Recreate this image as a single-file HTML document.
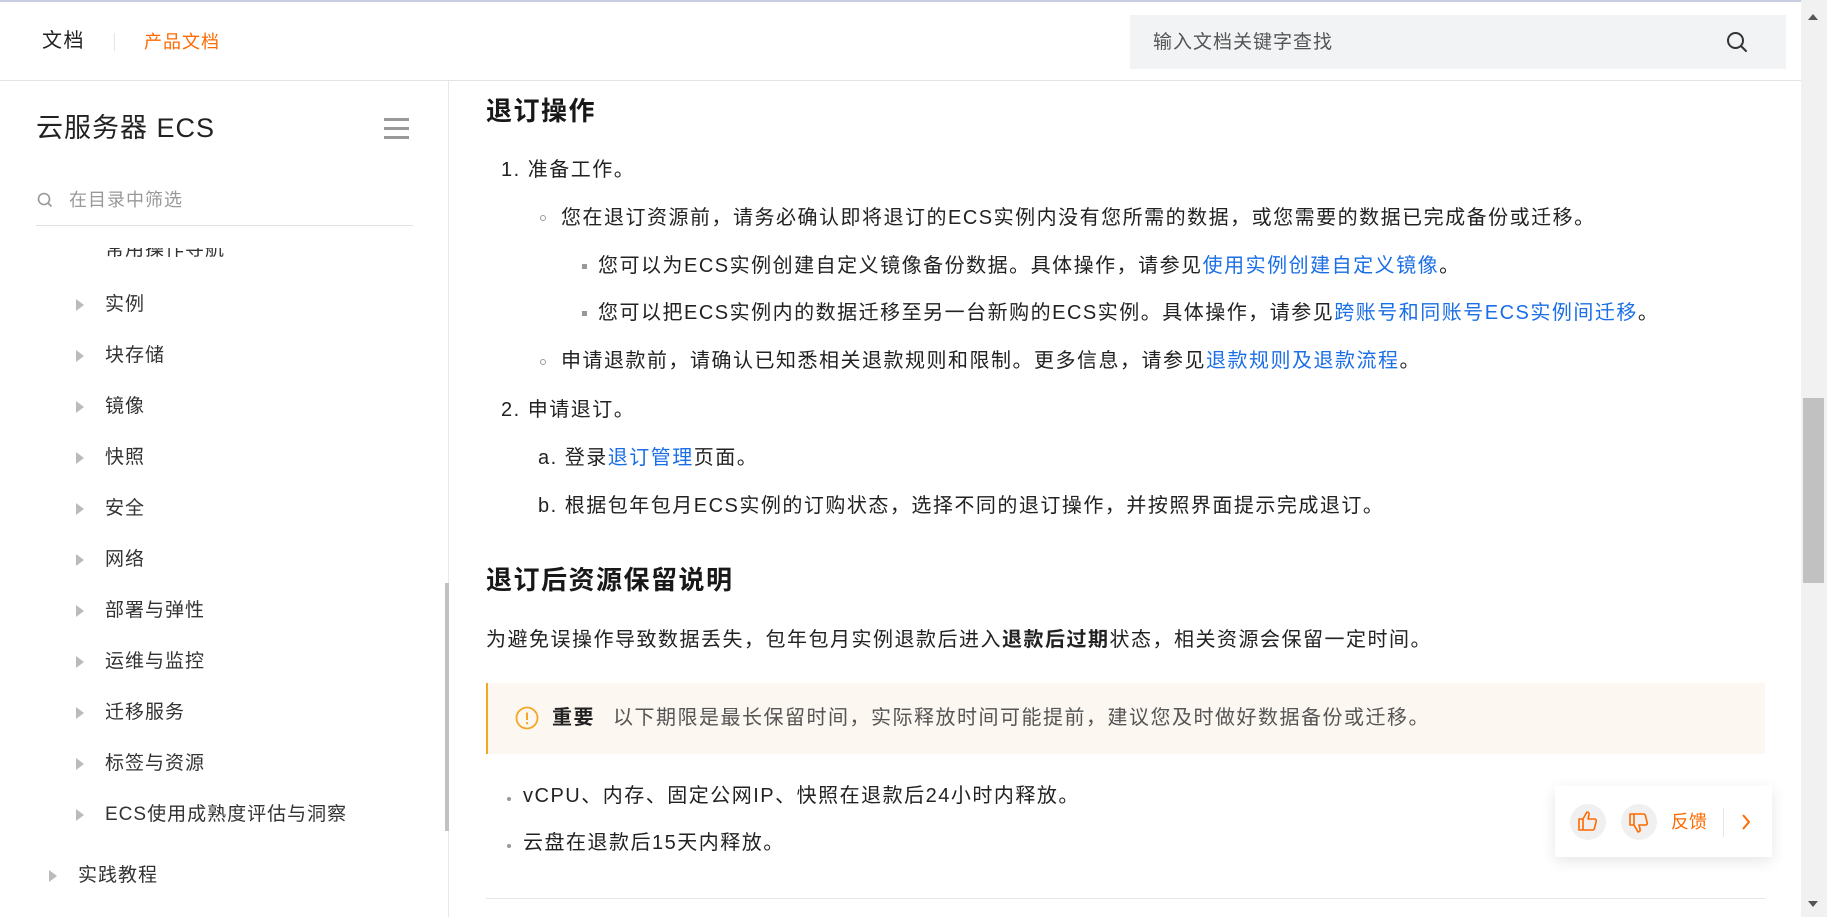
<!DOCTYPE html>
<html><head><meta charset="utf-8"><style>
*{margin:0;padding:0;box-sizing:border-box}
body{width:1827px;height:917px;overflow:hidden;background:#fff;font-family:"Liberation Sans","Noto Sans CJK SC",sans-serif;color:#181818;position:relative}
.a{position:absolute;white-space:nowrap}
.t{font-size:20px;letter-spacing:1.5px;line-height:30px;color:#222}
.lk{color:#1b6fe6}
.sb{font-size:19px;letter-spacing:1px;line-height:30px;color:#333}
.tri{position:absolute;width:0;height:0;border-top:6px solid transparent;border-bottom:6px solid transparent;border-left:8px solid #bbb}
h2{position:absolute;font-size:26px;letter-spacing:1.5px;font-weight:bold;line-height:36px;color:#181818;white-space:nowrap}
</style></head><body>
<div class="a" style="left:0;top:0;width:1827px;height:2px;background:#c9cfe0"></div>
<!-- header -->
<div class="a" style="left:0;top:80px;width:1801px;height:1px;background:#e3e3e3"></div>
<div class="a" style="left:42px;top:26px;font-size:20px;letter-spacing:1.5px;line-height:30px;color:#222">文档</div>
<div class="a" style="left:114px;top:33px;width:1px;height:18px;background:#e5e5e5"></div>
<div class="a" style="left:144px;top:27px;font-size:18px;letter-spacing:1px;line-height:30px;color:#ff6a00">产品文档</div>
<div class="a" style="left:1130px;top:15px;width:656px;height:54px;background:#f2f3f5"></div>
<div class="a" style="left:1153px;top:28px;font-size:19px;letter-spacing:1px;line-height:30px;color:#555">输入文档关键字查找</div>
<svg class="a" style="left:1725px;top:30px" width="24" height="24" viewBox="0 0 24 24"><circle cx="10.5" cy="10.5" r="7.5" fill="none" stroke="#333" stroke-width="2"/><path d="M16 16l5 5" stroke="#333" stroke-width="2" stroke-linecap="round"/></svg>
<!-- scrollbar -->
<div class="a" style="left:1801px;top:0;width:26px;height:917px;background:#f1f1f1"></div>
<div class="a" style="left:1803px;top:398px;width:21px;height:185px;background:#c1c1c1"></div>
<div class="a" style="left:1808px;top:14px;border-left:5px solid transparent;border-right:5px solid transparent;border-bottom:6px solid #555"></div>
<div class="a" style="left:1808px;top:901px;border-left:5px solid transparent;border-right:5px solid transparent;border-top:6px solid #555"></div>
<!-- sidebar -->
<div class="a" style="left:448px;top:81px;width:1px;height:836px;background:#e8e8e8"></div>
<div class="a" style="left:36px;top:110px;font-size:27px;letter-spacing:1px;line-height:36px;color:#222">云服务器 ECS</div>
<div class="a" style="left:384px;top:118px;width:25px;height:3px;background:#999"></div>
<div class="a" style="left:384px;top:127px;width:25px;height:3px;background:#999"></div>
<div class="a" style="left:384px;top:136px;width:25px;height:3px;background:#999"></div>
<svg class="a" style="left:36px;top:191px" width="18" height="18" viewBox="0 0 18 18"><circle cx="8" cy="8" r="5.5" fill="none" stroke="#999" stroke-width="1.6"/><path d="M12 12l3.5 3.5" stroke="#999" stroke-width="1.6"/></svg>
<div class="a" style="left:69px;top:185px;font-size:18px;letter-spacing:1px;line-height:30px;color:#999">在目录中筛选</div>
<div class="a" style="left:36px;top:225px;width:377px;height:1px;background:#e2e2e2"></div>
<div class="a" style="left:0;top:248px;width:445px;height:40px;overflow:hidden">
 <div class="a sb" style="left:105px;top:-13px">常用操作导航</div>
</div>
<div class="tri" style="left:76px;top:299px"></div><div class="a sb" style="left:105px;top:290px">实例</div>
<div class="tri" style="left:76px;top:350px"></div><div class="a sb" style="left:105px;top:341px">块存储</div>
<div class="tri" style="left:76px;top:401px"></div><div class="a sb" style="left:105px;top:392px">镜像</div>
<div class="tri" style="left:76px;top:452px"></div><div class="a sb" style="left:105px;top:443px">快照</div>
<div class="tri" style="left:76px;top:503px"></div><div class="a sb" style="left:105px;top:494px">安全</div>
<div class="tri" style="left:76px;top:554px"></div><div class="a sb" style="left:105px;top:545px">网络</div>
<div class="tri" style="left:76px;top:605px"></div><div class="a sb" style="left:105px;top:596px">部署与弹性</div>
<div class="tri" style="left:76px;top:656px"></div><div class="a sb" style="left:105px;top:647px">运维与监控</div>
<div class="tri" style="left:76px;top:707px"></div><div class="a sb" style="left:105px;top:698px">迁移服务</div>
<div class="tri" style="left:76px;top:758px"></div><div class="a sb" style="left:105px;top:749px">标签与资源</div>
<div class="tri" style="left:76px;top:809px"></div><div class="a sb" style="left:105px;top:800px">ECS使用成熟度评估与洞察</div>
<div class="tri" style="left:49px;top:870px"></div><div class="a sb" style="left:78px;top:861px">实践教程</div>
<div class="a" style="left:445px;top:583px;width:4px;height:248px;background:#c1c1c1"></div>
<!-- content -->
<h2 style="left:486px;top:93px">退订操作</h2>
<div class="a t" style="left:501px;top:155px">1. 准备工作。</div>
<div class="a" style="left:540px;top:215px;width:6px;height:6px;border:1px solid #999;border-radius:50%"></div>
<div class="a t" style="left:561px;top:203px">您在退订资源前，请务必确认即将退订的ECS实例内没有您所需的数据，或您需要的数据已完成备份或迁移。</div>
<div class="a" style="left:582px;top:264px;width:5px;height:5px;background:#999"></div>
<div class="a t" style="left:598px;top:251px">您可以为ECS实例创建自定义镜像备份数据。具体操作，请参见<span class="lk">使用实例创建自定义镜像</span>。</div>
<div class="a" style="left:582px;top:311px;width:5px;height:5px;background:#999"></div>
<div class="a t" style="left:598px;top:298px">您可以把ECS实例内的数据迁移至另一台新购的ECS实例。具体操作，请参见<span class="lk">跨账号和同账号ECS实例间迁移</span>。</div>
<div class="a" style="left:540px;top:359px;width:6px;height:6px;border:1px solid #999;border-radius:50%"></div>
<div class="a t" style="left:561px;top:346px">申请退款前，请确认已知悉相关退款规则和限制。更多信息，请参见<span class="lk">退款规则及退款流程</span>。</div>
<div class="a t" style="left:501px;top:395px">2. 申请退订。</div>
<div class="a t" style="left:538px;top:443px">a. 登录<span class="lk">退订管理</span>页面。</div>
<div class="a t" style="left:538px;top:491px">b. 根据包年包月ECS实例的订购状态，选择不同的退订操作，并按照界面提示完成退订。</div>
<h2 style="left:486px;top:562px">退订后资源保留说明</h2>
<div class="a t" style="left:486px;top:625px">为避免误操作导致数据丢失，包年包月实例退款后进入<b>退款后过期</b>状态，相关资源会保留一定时间。</div>
<div class="a" style="left:486px;top:683px;width:1279px;height:71px;background:#fcf7f1;border-left:2px solid #f5a623"></div>
<svg class="a" style="left:515px;top:706px" width="24" height="24" viewBox="0 0 24 24"><circle cx="12" cy="12" r="10.5" fill="none" stroke="#f5a623" stroke-width="1.8"/><path d="M12 6.5v7.5" stroke="#f5a623" stroke-width="2"/><circle cx="12" cy="17.3" r="1.2" fill="#f5a623"/></svg>
<div class="a t" style="left:552px;top:703px;font-weight:bold;color:#222">重要</div>
<div class="a t" style="left:613px;top:703px;color:#555">以下期限是最长保留时间，实际释放时间可能提前，建议您及时做好数据备份或迁移。</div>
<div class="a" style="left:507px;top:797px;width:4px;height:4px;border-radius:50%;background:#999"></div>
<div class="a t" style="left:523px;top:781px">vCPU、内存、固定公网IP、快照在退款后24小时内释放。</div>
<div class="a" style="left:507px;top:844px;width:4px;height:4px;border-radius:50%;background:#999"></div>
<div class="a t" style="left:523px;top:828px">云盘在退款后15天内释放。</div>
<div class="a" style="left:486px;top:898px;width:1279px;height:1px;background:#e5e5e5"></div>
<!-- feedback -->
<div class="a" style="left:1555px;top:786px;width:217px;height:71px;background:#fff;box-shadow:0 4px 14px rgba(0,0,0,0.1)"></div>
<div class="a" style="left:1570px;top:804px;width:36px;height:36px;border-radius:50%;background:#f0f0f0"></div>
<svg class="a" style="left:1577px;top:810px" width="22" height="22" viewBox="0 0 22 22"><path d="M2 9h4v11H2z M6 9l4-7c1.5 0 2.5 1 2 3l-1 4h6.5c1.2 0 2 1 1.7 2.2l-1.8 7.3c-.3.9-1 1.5-2 1.5H6" fill="none" stroke="#ff6a00" stroke-width="1.6" stroke-linejoin="round"/></svg>
<div class="a" style="left:1621px;top:804px;width:36px;height:36px;border-radius:50%;background:#f0f0f0"></div>
<svg class="a" style="left:1628px;top:812px" width="22" height="22" viewBox="0 0 22 22"><g transform="translate(0,22) scale(1,-1)"><path d="M2 9h4v11H2z M6 9l4-7c1.5 0 2.5 1 2 3l-1 4h6.5c1.2 0 2 1 1.7 2.2l-1.8 7.3c-.3.9-1 1.5-2 1.5H6" fill="none" stroke="#ff6a00" stroke-width="1.6" stroke-linejoin="round"/></g></svg>
<div class="a" style="left:1671px;top:807px;font-size:18px;line-height:30px;color:#ff6a00">反馈</div>
<div class="a" style="left:1723px;top:808px;width:1px;height:29px;background:#e5e5e5"></div>
<svg class="a" style="left:1740px;top:813px" width="12" height="18" viewBox="0 0 12 18"><path d="M3 2l6 7-6 7" fill="none" stroke="#ff6a00" stroke-width="2"/></svg>
</body></html>
